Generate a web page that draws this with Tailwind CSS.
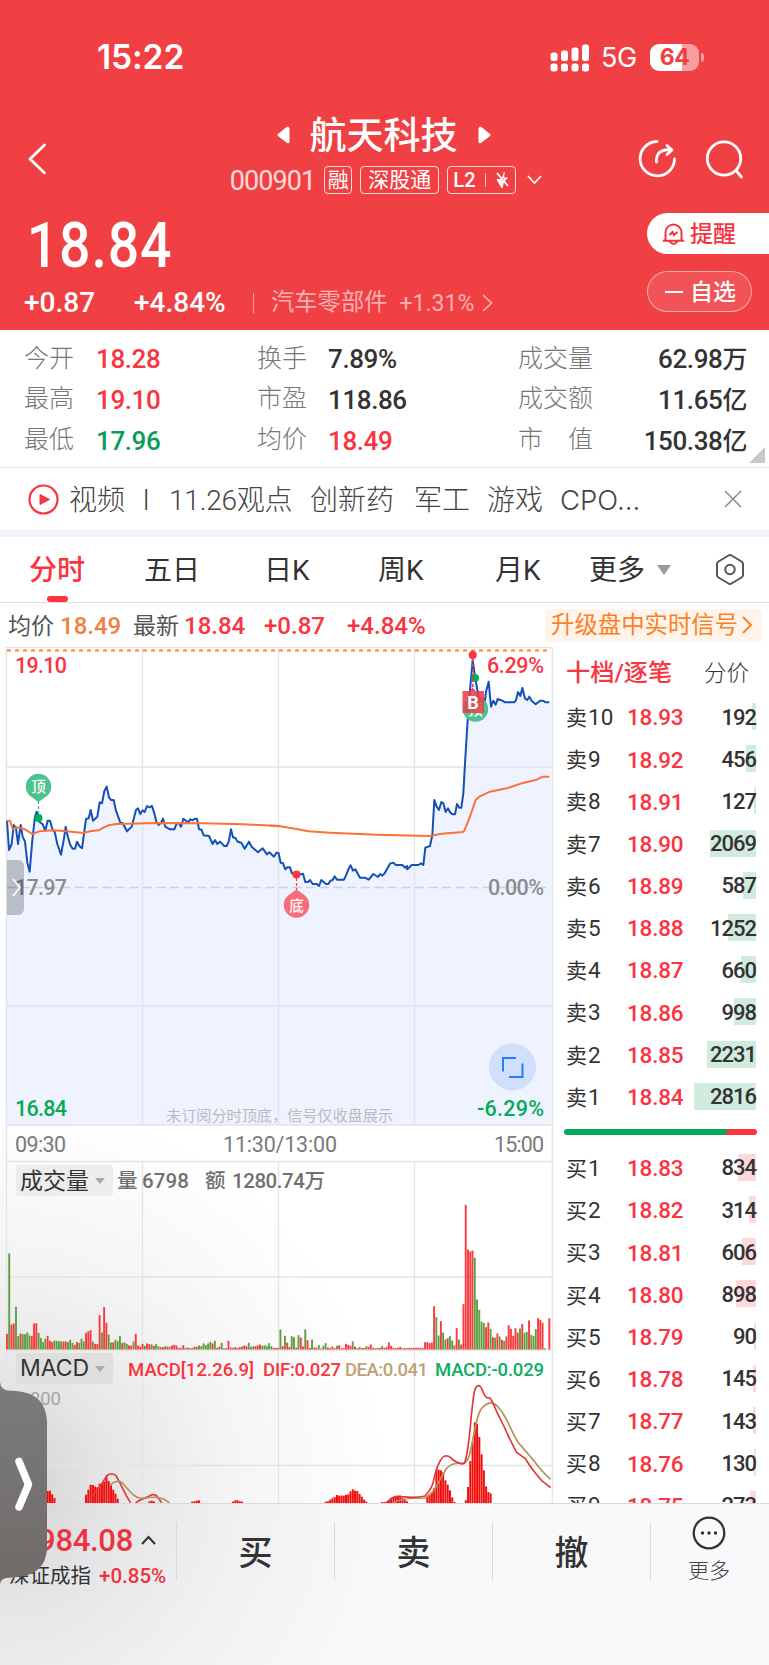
<!DOCTYPE html>
<html lang="zh-CN">
<head>
    <meta charset="UTF-8">
    <meta name="viewport" content="width=device-width, initial-scale=1.0">
    <title>航天科技 000901</title>
    <script src="https://cdn.jsdelivr.net/npm/@tailwindcss/browser@4"></script>
</head>
<body class="bg-white">
<div class="relative w-[769px] h-[1665px] overflow-hidden bg-white font-['Roboto','Noto_Sans_CJK_SC',sans-serif] leading-none text-[#333] whitespace-nowrap">

    <!-- Header -->
    <header class="h-[330px] bg-[#f04043] text-white">
        <!-- Status bar -->
        <div class="flex h-[108px] items-center pl-[97px] pr-[65px] pt-[7px]">
            <span class="font-['Inter'] text-[33.500px] font-semibold tracking-[-0.1px]">15:22</span>
            <svg class="ml-auto" width="40" height="28" viewBox="551 43.500 40 28" fill="currentColor">
                <rect x="551.500" y="52" width="7" height="8.500" rx="2.500"/><rect x="562" y="50" width="7" height="10.500" rx="2.500"/><rect x="572.500" y="47" width="7" height="13.500" rx="2.500"/><rect x="583" y="44" width="7" height="16.500" rx="2.500"/>
                <rect x="551.500" y="63" width="7" height="8" rx="2.500"/><rect x="562" y="63" width="7" height="8" rx="2.500"/><rect x="572.500" y="63" width="7" height="8" rx="2.500"/><rect x="583" y="63" width="7" height="8" rx="2.500"/>
            </svg>
            <span class="ml-[11px] w-[38px] font-['Inter'] text-[27px] tracking-[-0.5px]">5G</span>
            <div class="ml-[11px] flex h-[27px] w-[49px] items-center justify-center rounded-[9px] bg-linear-to-r from-white from-65% to-white/50 to-65% font-['Inter'] text-[23px] font-bold tracking-[-0.5px] text-[#f04043]">64</div>
            <div class="ml-[2px] h-[9px] w-[3px] rounded-r-full bg-white/50"></div>
        </div>

        <!-- Title -->
        <div class="flex h-[96px] items-start justify-between pl-[28px] pr-[25px]">
            <svg class="mt-[35px]" width="19" height="32" viewBox="0 0 19 32" fill="none" stroke="currentColor" stroke-width="2.800" stroke-linecap="round" stroke-linejoin="round"><path d="M16.500 2 2 16l14.500 14"/></svg>
            <div class="ml-[87px] flex flex-col items-center">
                <div class="mt-[8px] mr-[5px] flex h-[38px] items-center gap-[20px]">
                    <svg width="13" height="18" viewBox="0 0 13 18" fill="currentColor"><path d="M1 8 10 .8Q12.500 0 12.500 3v12q0 3-2.500 2L1 10Q0 9 1 8Z"/></svg>
                    <h1 class="pt-[2px] text-[37px] font-medium">航天科技</h1>
                    <svg width="13" height="18" viewBox="0 0 13 18" fill="currentColor"><path d="M12 8 3 .8Q.5 0 .5 3v12q0 3 2.500 2l9-7q1-1 0-2Z"/></svg>
                </div>
                <div class="mt-[12px] flex h-[28px] items-center">
                    <span class="mr-[9px] pt-[3px] text-[27px] tracking-[-0.9px] text-white/80">000901</span>
                    <span class="flex h-[28px] w-[28px] items-center justify-center rounded-[4px] border border-white/80 text-[21px]">融</span>
                    <span class="ml-[8px] flex h-[28px] w-[79px] items-center justify-center rounded-[4px] border border-white/80 text-[21px]">深股通</span>
                    <span class="ml-[8px] flex h-[28px] w-[69px] items-center rounded-[4px] border border-white/80 pl-[5px] text-[20px] font-medium">L2
                        <i class="ml-[9px] h-[14px] w-px bg-white/70"></i>
                        <svg class="ml-[9px]" width="15" height="18" viewBox="0 0 15 18" fill="currentColor" stroke="currentColor" stroke-width="1.800"><path d="m2 2 11 13"/><path d="M9.500 1 7.500 7h5L9 10M6 8.500H2L7 17l1.500-6" stroke-width="1"/></svg>
                    </span>
                    <svg class="ml-[11px]" width="15" height="10" viewBox="0 0 15 10" fill="none" stroke="currentColor" stroke-width="1.600"><path d="m1 1 6.500 7L14 1"/></svg>
                </div>
            </div>
            <div class="mt-[31px] flex gap-[28px]">
                <svg width="39" height="40" viewBox="640 139 39 40" fill="none" stroke="currentColor" stroke-width="2.800" stroke-linecap="round" stroke-linejoin="round"><path d="M659 141.500A17.200 17.200 0 1 0 676.500 159M658.500 162c-.5-9 4-12.500 14.500-12.500M669 145.500l5 4.500-5 4.500"/></svg>
                <svg width="39" height="40" viewBox="707 139 39 40" fill="none" stroke="currentColor" stroke-width="2.800" stroke-linecap="round"><circle cx="726" cy="158.500" r="16.700"/><path d="m738 170.500 5.500 6.500"/></svg>
            </div>
        </div>

        <!-- Price -->
        <div class="flex justify-between">
            <div class="pl-[24px]">
                <div class="mt-[10px] h-[63px] origin-left scale-x-[0.880] pl-[3px] text-[63px] font-medium tracking-[1px]">18.84</div>
                <div class="mt-[12px] flex h-[28px] items-center text-[28px] font-medium">
                    <span class="w-[110px]">+0.87</span>
                    <span class="w-[119px]">+4.84%</span>
                    <i class="h-[20px] w-px bg-white/50"></i>
                    <span class="ml-[17px] text-[23.300px] font-normal text-white/60">汽车零部件</span>
                    <span class="ml-[12px] text-[23px] font-normal text-white/60">+1.31%</span>
                    <svg class="ml-[8px] opacity-60" width="11" height="18" viewBox="0 0 11 18" fill="none" stroke="currentColor" stroke-width="1.700"><path d="m1 1 8.500 8L1 17"/></svg>
                </div>
            </div>
            <div class="pt-[9px] text-[23px] font-medium">
                <div class="flex h-[41px] w-[122px] items-center rounded-l-full bg-white pl-[15px] text-[#f5333f]">
                    <svg width="23" height="24" viewBox="0 0 23 24" fill="none" stroke="currentColor" stroke-width="2"><path d="M3.500 18.500V10.500a8 8 0 0 1 16 0v8M.8 18.700h21.400M7.500 19.500q4 5 8 0M7.500 13l3-3 1.500 3 3.500-3"/></svg>
                    <span class="ml-[5px] pt-[2px]">提醒</span>
                </div>
                <div class="mt-[17px] flex h-[41px] w-[105px] items-center rounded-full border border-white/50 bg-white/10 pl-[17px]">
                    <i class="h-[2px] w-[18px] bg-white"></i>
                    <span class="ml-[7px] pt-[2px]">自选</span>
                </div>
            </div>
        </div>
    </header>

    <!-- Stats -->
    <section class="relative h-[138px] border-b border-[#e6e6e8] pt-[8px] text-[26px] font-medium">
        <div class="grid h-[122px] grid-cols-[72px_161px_71px_190px_100px_129px] items-center pl-[24px] tracking-[-0.4px]">
            <span class="text-[25px] font-light tracking-normal text-[#777]">今开</span><span class="pt-[2px] text-[#fa3440]">18.28</span>
            <span class="text-[25px] font-light tracking-normal text-[#777]">换手</span><span class="pt-[2px]">7.89%</span>
            <span class="text-[25px] font-light tracking-normal text-[#777]">成交量</span><span class="pt-[2px] text-right">62.98<span class="text-[25px]">万</span></span>
            <span class="text-[25px] font-light tracking-normal text-[#777]">最高</span><span class="pt-[2px] text-[#fa3440]">19.10</span>
            <span class="text-[25px] font-light tracking-normal text-[#777]">市盈</span><span class="pt-[2px]">118.86</span>
            <span class="text-[25px] font-light tracking-normal text-[#777]">成交额</span><span class="pt-[2px] text-right">11.65<span class="text-[25px]">亿</span></span>
            <span class="text-[25px] font-light tracking-normal text-[#777]">最低</span><span class="pt-[2px] text-[#0a9c55]">17.96</span>
            <span class="text-[25px] font-light tracking-normal text-[#777]">均价</span><span class="pt-[2px] text-[#fa3440]">18.49</span>
            <span class="text-[25px] font-light tracking-normal text-[#777]">市　值</span><span class="pt-[2px] text-right">150.38<span class="text-[25px]">亿</span></span>
        </div>
        <svg class="absolute right-[4px] bottom-[4px]" width="16" height="16"><path d="M16 0v16H0Z" fill="#c8c8c8"/></svg>
    </section>

    <!-- News -->
    <section class="flex h-[62px] items-center pl-[28px] pr-[27px] text-[28px] font-light text-[#444]">
        <svg width="31" height="31" viewBox="0 0 31 31"><circle cx="15.500" cy="15.500" r="14" fill="none" stroke="#fa3440" stroke-width="2.200"/><path d="M12 10.500v10l9.500-5Z" fill="#fa3440" stroke="#fa3440" stroke-linejoin="round"/></svg>
        <div class="ml-[10px] flex pt-[4px]">
            <span class="w-[74px]">视频</span>
            <span class="w-[26px]">l</span>
            <span class="w-[141px] tracking-[-0.200px]">11.26观点</span>
            <span class="w-[104px]">创新药</span>
            <span class="w-[73px]">军工</span>
            <span class="w-[73px]">游戏</span>
            <span class="font-['Inter'] text-[27.500px]">CPO...</span>
        </div>
        <svg class="ml-auto" width="18" height="18" viewBox="0 0 18 18" stroke="#888" stroke-width="1.500"><path d="m1 1 16 16M17 1 1 17"/></svg>
    </section>
    <div class="h-[7px] bg-[#f2f3f9]"></div>

    <!-- Tabs -->
    <nav class="flex h-[66px] items-center border-b border-[#dedee0] pl-[29px] text-[28px]">
        <a class="relative flex h-full w-[115px] items-center pt-[3px] font-medium text-[#fa3440]">分时<i class="absolute bottom-0 left-[18px] h-[6px] w-[21px] rounded-[3px] bg-[#fa3440]"></i></a>
        <a class="w-[120px] pt-[3px]">五日</a>
        <a class="w-[114px] pt-[3px]">日K</a>
        <a class="w-[117px] pt-[3px]">周K</a>
        <a class="w-[94px] pt-[3px]">月K</a>
        <a class="pt-[3px]">更多</a>
        <svg class="ml-[12px]" width="14" height="10"><path d="M0 0h14L7 10Z" fill="#999"/></svg>
        <svg class="ml-[45px]" width="28" height="31" viewBox="0 0 28 31" fill="none" stroke="#555" stroke-width="2" stroke-linejoin="round"><path d="M12.500 1.500q1.500-1 3 0l10 6q1.500 1 1.500 2.500v11q0 1.500-1.500 2.500l-10 6q-1.500 1-3 0l-10-6Q1 22.500 1 21V10q0-1.500 1.500-2.500Z"/><circle cx="14" cy="15.500" r="4.700"/></svg>
    </nav>

    <!-- Latest quote -->
    <div class="flex h-[44px] items-center pl-[8px] text-[24px] font-medium text-[#fa3440]">
        <span class="w-[52px] pt-[2px] text-[23px] font-normal text-[#555]">均价</span>
        <span class="w-[73px] pt-[2px] text-[#f08040]">18.49</span>
        <span class="w-[51px] pt-[2px] text-[23px] font-normal text-[#555]">最新</span>
        <span class="w-[80px] pt-[2px]">18.84</span>
        <span class="w-[83px] pt-[2px]">+0.87</span>
        <span class="pt-[2px]">+4.84%</span>
        <div class="ml-auto mr-[7px] flex h-[33px] w-[217px] items-center rounded-[4px] bg-[#fff4eb] pl-[6px] text-[23.400px] font-normal text-[#ff7e1d]"><span class="pt-[2px]">升级盘中实时信号</span>
            <svg class="ml-[4px]" width="11" height="18" viewBox="0 0 11 18" fill="none" stroke="currentColor" stroke-width="2"><path d="m1 1 8 8-8 8"/></svg>
        </div>
    </div>

    <main class="flex h-[856px] overflow-hidden">
        <!-- Charts -->
        <svg class="shrink-0" width="553" height="856" viewBox="0 647 553 856">
            <defs>
                <radialGradient id="shade" gradientUnits="userSpaceOnUse" cx="0" cy="1485" r="390">
                    <stop offset="0" stop-color="#000" stop-opacity=".18"/><stop offset=".3" stop-color="#000" stop-opacity=".095"/><stop offset=".6" stop-color="#000" stop-opacity=".04"/><stop offset="1" stop-color="#000" stop-opacity="0"/>
                </radialGradient>
            </defs>
            <rect x="0" y="1095" width="553" height="408" fill="url(#shade)"/>

            <!-- Intraday area -->
            <g fill="#eef3ff">
                <polygon id="areaA" transform="translate(0 640) scale(.33333)"/>
                <polygon id="areaB" transform="translate(270 640) scale(.33333)"/>
            </g>
            <g stroke="#e3e4e7" stroke-width="1.300">
                <path d="M6.500 647.500H553M6.500 767H552M6.500 1006H552M6.500 1125H552M6.500 1161.500H552M6.500 1277H552M6.500 1350H552M6.500 1465.500H552M6.500 647V1503M142.500 647V1125M278.500 647V1125M414.500 647V1125M142.500 1161V1503M278.500 1161V1503M414.500 1161V1503M552.300 647V1503" fill="none"/>
            </g>
            <path d="M7 650.500H550" stroke="#fb8130" stroke-width="2" stroke-dasharray="4 4"/>
            <path d="M7 887.500H550" stroke="#c6d3e0" stroke-width="1.300" stroke-dasharray="9 4.600"/>

            <g fill="none" stroke-width="6" stroke-linejoin="round">
                <g transform="translate(0 640) scale(.33333)">
                    <polyline id="priceA" stroke="#1450b8"/>
                    <polyline stroke="#f97338" points="21,542 30,542 38,567 50,562 75,568 97,582 118,574 160,571 200,574 250,579 270,574 295,571 310,563 325,556 350,552 470,549 610,550 730,553 840,558"/>
                </g>
                <g transform="translate(270 640) scale(.33333)">
                    <polyline id="priceB" stroke="#1450b8"/>
                    <polyline stroke="#f97338" points="0,557 25,558 80,567 115,574 180,578 320,584 480,588 515,581 578,576 583,572 600,530 617,480 628,470 660,455 710,445 755,430 800,419 818,410 838,410"/>
                </g>
            </g>

            <!-- Signals -->
            <path d="M38.500 801V814" stroke="#34b877" stroke-width="1.200" stroke-dasharray="3 2"/>
            <path d="M30 796 38.500 802 47 796A12.700 12.700 0 1 0 30 796Z" fill="#4cc38c"/>
            <circle cx="38.500" cy="818" r="4" fill="#00ac5b"/>
            <path d="M296.500 878V891" stroke="#fa3440" stroke-width="1.200" stroke-dasharray="3 2"/>
            <path d="M288 895.500 296.500 889.500 305 895.500A12.700 12.700 0 1 1 288 895.500Z" fill="#f76d78"/>
            <circle cx="296.500" cy="874.500" r="4" fill="#fa3440"/>
            <circle cx="475.500" cy="709" r="12.700" fill="#4cc38c"/>
            <g fill="#fff" text-anchor="middle" font-size="14.500" font-weight="500">
                <text x="38.500" y="792">顶</text><text x="296.500" y="911">底</text><text x="475.500" y="715">顶</text>
            </g>
            <circle cx="475" cy="678" r="4" fill="#00ac5b"/>
            <path d="M472.700 659V691" stroke="#fa3440" stroke-width="1.500" stroke-dasharray="3 2"/>
            <circle cx="472.700" cy="655" r="4" fill="#fa3440"/>
            <path d="M462.500 691h7l3-3.500 3 3.500h8.500v22h-21.500Z" fill="#ea3a48" fill-opacity=".85"/>
            <text x="473" y="709" text-anchor="middle" font-size="18" font-weight="700" fill="#fff">B</text>

            <!-- Axis labels -->
            <g font-size="21.500" font-weight="500">
                <text x="15" y="672.500" textLength="52" fill="#fa3440">19.10</text>
                <text x="487" y="672.500" textLength="57" fill="#fa3440">6.29%</text>
                <text x="15" y="895" textLength="52" fill="#8c8c8c">17.97</text>
                <text x="488" y="895" textLength="56" fill="#8c8c8c">0.00%</text>
                <text x="15" y="1116" textLength="52" fill="#06a957">16.84</text>
                <text x="477" y="1116" textLength="67" fill="#06a957">-6.29%</text>
            </g>
            <text x="166" y="1121" font-size="15.200" textLength="227" fill="#b9bcc2">未订阅分时顶底，信号仅收盘展示</text>
            <circle cx="512.500" cy="1067" r="23.500" fill="#d0dffc"/>
            <path d="M503 1071.500V1058H516M522.500 1063.500V1077H509" fill="none" stroke="#2b7bfb" stroke-width="2"/>
            <g font-size="21.500" fill="#7a7a7a">
                <text x="15" y="1151.500" textLength="51">09:30</text>
                <text x="223" y="1151.500" textLength="114">11:30/13:00</text>
                <text x="494" y="1151.500" textLength="50">15:00</text>
            </g>

            <!-- Volume -->
            <g id="volume"></g>
            <rect x="16" y="1165" width="97" height="31" rx="3" fill="#ededed"/>
            <text x="20" y="1188.500" font-size="23" textLength="69" fill="#333">成交量</text>
            <path d="M95 1178h10l-5 6Z" fill="#aaa"/>
            <g font-size="20.500" fill="#707070" font-weight="500">
                <text x="117" y="1188">量</text><text x="142" y="1188" textLength="47">6798</text>
                <text x="205" y="1188">额</text><text x="232" y="1188" textLength="93">1280.74万</text>
            </g>

            <!-- MACD -->
            <g id="macd" fill="#f20d0d"></g>
            <g fill="none" stroke-width="5" stroke-linejoin="round">
                <g transform="translate(0 1350) scale(.33333)">
                    <path stroke="#e03a3f" d="M262 450C290 430 305 400 322 376Q335 368 347 376C360 395 375 435 392 458M407 458Q430 445 445 440 458 430 470 437L485 458"/>
                    <path stroke="#b2935b" d="M330 405Q350 388 365 397C385 415 400 445 425 445 450 442 480 435 508 458"/>
                </g>
                <g transform="translate(270 1350) scale(.33333)">
                    <path stroke="#b2935b" d="M370 458Q390 444 465 444C490 435 510 385 530 355Q545 338 575 340 595 340 602 300C610 270 620 180 640 170Q655 155 670 160C705 180 720 240 745 278L790 330Q815 365 842 388"/>
                    <path stroke="#e6353a" d="M350 458Q370 435 395 440 440 445 465 438C475 425 485 420 490 395 500 345 515 320 525 318Q535 317 541 322 550 332 560 336 575 345 583 340C600 300 600 200 613 125Q622 95 635 115 643 140 650 143L660 144Q668 155 680 185L700 225Q725 280 740 307L765 325 785 355Q800 375 815 392L842 413"/>
                </g>
            </g>
            <rect x="16" y="1353" width="97" height="31" rx="3" fill="#dfdfdf"/>
            <text x="20" y="1376" font-family="Inter" font-size="23" textLength="69" fill="#333">MACD</text>
            <path d="M95 1366h10l-5 6Z" fill="#aaa"/>
            <g font-size="18.500" font-weight="500">
                <text x="128" y="1376" textLength="126" fill="#fa3440">MACD[12.26.9]</text>
                <text x="263" y="1376" textLength="78" fill="#fa3440">DIF:0.027</text>
                <text x="345" y="1376" textLength="83" fill="#bda273">DEA:0.041</text>
                <text x="435" y="1376" textLength="109" fill="#0cae5f">MACD:-0.029</text>
                <text x="15" y="1405" textLength="46" fill="#a5a5a5" font-weight="400">0.200</text>
            </g>
        </svg>

        <!-- Order book -->
        <aside class="w-[216px] pl-[11px] pr-[12px]">
            <div class="flex h-[49px] items-center pl-[2px] pt-[3px] text-[24.200px] font-medium text-[#fa3440]">十档/逐笔<span class="ml-auto mr-[8px] text-[22.500px] font-light text-[#333]">分价</span></div>
            <div id="asks"></div>
            <div class="mt-[11px] mb-[12px] h-[6px] rounded-full bg-[linear-gradient(120deg,#04ab5c_83.500%,#fa3440_83.500%)]"></div>
            <div id="bids"></div>
        </aside>
    </main>

    <!-- Bottom bar -->
    <footer class="flex h-[162px] border-t border-[#d9dadd] bg-[#f9f9fb] bg-[radial-gradient(circle_at_0_-18px,rgba(0,0,0,.16),rgba(0,0,0,.08)_117px,rgba(0,0,0,.035)_234px,transparent_390px)]">
        <div class="mt-[18px] flex h-[58px] w-[177px] flex-col border-r border-[#d9dadd] text-[#ec3440]">
            <div class="mt-[3px] flex h-[30px] items-center text-[31px] font-medium"><span class="w-[133px] text-right tracking-[-0.300px]">12984.08</span>
                <svg class="ml-[8px]" width="15" height="10" viewBox="0 0 15 10" fill="none" stroke="#333" stroke-width="2"><path d="m1 9 6.500-7L14 9"/></svg>
            </div>
            <div class="mt-[11px] flex h-[21px] items-center pl-[9px] text-[20.500px]"><span class="w-[90px] text-[#333]">深证成指</span><span class="font-medium">+0.85%</span></div>
        </div>
        <div class="mt-[18px] flex h-[58px] w-[158px] items-center justify-center border-r border-[#d9dadd] pt-[3px] text-[34px] font-medium">买</div>
        <div class="mt-[18px] flex h-[58px] w-[158px] items-center justify-center border-r border-[#d9dadd] pt-[3px] text-[34px] font-medium">卖</div>
        <div class="mt-[18px] flex h-[58px] w-[158px] items-center justify-center border-r border-[#d9dadd] pt-[3px] text-[34px] font-medium">撤</div>
        <div class="flex flex-1 flex-col items-center pt-[12px] pr-[2px]">
            <svg width="34" height="34" viewBox="0 0 34 34"><circle cx="17" cy="17" r="15.300" fill="none" stroke="#333" stroke-width="2.300"/><g fill="#333"><circle cx="10.500" cy="17" r="1.700"/><circle cx="17" cy="17" r="1.700"/><circle cx="23.500" cy="17" r="1.700"/></g></svg>
            <span class="mt-[11px] text-[21px] font-light text-[#444]">更多</span>
        </div>
    </footer>

    <!-- Drawer handles over the charts -->
    <div class="absolute left-[7px] top-[860px] flex h-[55px] w-[17px] items-center justify-center rounded-r-[6px] bg-black/22">
        <svg class="ml-[2px]" width="9" height="19" viewBox="0 0 9 19" fill="none" stroke="#fff" stroke-width="1.600"><path d="m1 1 7 8.500L1 18"/></svg>
    </div>
    <svg class="absolute left-0 top-[1380px]" width="50" height="206" viewBox="0 1380 50 206">
        <defs><linearGradient id="knob" x2="0" y2="1"><stop stop-color="#7b7b7b"/><stop offset="1" stop-color="#706b69"/></linearGradient></defs>
        <path d="M0 1382Q1 1390 8 1390.500L16 1391Q46 1393 47 1422V1548Q46 1574 18 1577L6 1578Q1 1579 0 1584Z" fill="url(#knob)"/>
        <path d="M19 1461.500 28.500 1484.500 19 1507" fill="none" stroke="#fff" stroke-width="7.500" stroke-linecap="round" stroke-linejoin="round"/>
    </svg>
</div>

<script>
    // Intraday price, morning and afternoon session
    const morning = '21,542 27,630 35,612 41,555 48,565 54,612 62,555 68,590 75,605 82,668 89,695 97,600 105,530 110,515 118,545 128,553 136,572 143,542 150,542 158,570 164,575 172,612 183,644 192,595 197,560 204,592 211,615 218,626 225,626 231,605 238,618 246,625 258,537 266,535 272,510 279,542 292,530 299,487 306,490 313,453 320,440 327,472 333,480 341,480 348,512 361,548 368,549 381,574 395,560 408,510 414,505 421,522 428,511 434,516 441,498 448,502 456,498 463,520 469,545 476,555 483,548 489,536 496,560 510,568 523,568 530,550 537,550 543,560 550,536 564,547 571,538 578,541 584,536 591,536 597,567 605,570 611,586 627,588 638,612 645,600 652,612 660,605 673,618 680,618 686,605 693,568 699,592 706,594 713,605 724,608 734,626 747,605 755,620 774,637 788,625 801,643 808,637 822,650 829,638 835,638';
    const afternoon = '25,637 32,668 39,670 46,688 52,682 60,682 66,700 80,705 99,701 106,726 114,726 120,720 128,732 140,732 147,738 154,720 168,732 175,732 181,722 188,720 194,709 201,719 222,719 229,704 236,686 242,676 249,692 256,688 270,713 285,713 296,719 310,702 324,711 330,702 337,707 344,700 360,671 370,668 378,675 397,675 405,683 411,678 412,688 425,675 445,675 453,670 460,675 466,623 480,618 487,585 493,480 500,500 507,510 514,486 520,490 527,516 534,505 541,518 548,523 555,523 561,492 568,503 574,503 580,460 585,370 593,240 600,150 608,60 615,110 622,150 630,190 640,220 648,155 656,125 663,200 670,182 677,194 683,177 697,182 705,187 733,187 738,180 744,156 751,168 757,144 765,175 772,180 778,170 785,182 797,193 810,182 820,182 826,187 838,187';
    document.getElementById('priceA').setAttribute('points', morning);
    document.getElementById('priceB').setAttribute('points', afternoon);
    document.getElementById('areaA').setAttribute('points', '21,1455 ' + morning + ' 835,1455');
    document.getElementById('areaB').setAttribute('points', '25,1455 ' + afternoon + ' 844,187 844,1455');

    // One volume bar per minute, r = up, g = down
    const volume = 'r47 g288 r75 r78 g128 g40 r48 g46 g46 g51 g42 r40 r78 r79 g50 g35 g22 g32 r41 r26 r22 g27 g26 g25 g24 r24 r24 g22 g29 g20 r14 r22 g20 g32 g24 r50 r55 r58 g24 r17 r16 r103 g51 r127 r80 g45 g21 r21 g29 g25 g41 r19 g21 g17 r12 r12 g24 r47 r12 r8 r17 g11 r18 r16 g15 r11 g16 g10 r7 r7 g10 r9 g8 r12 r14 r12 r5 g5 r13 g5 r6 g4 g5 r8 r8 g12 g10 g18 g13 g18 g23 r18 g26 g5 r8 g20 g4 r4 r26 r6 g5 r7 r5 r7 g9 r12 r10 g20 g8 g10 r10 r12 r15 g11 g13 g10 g19 g10 r5 r5 r5 g60 r10 g41 r21 r8 g40 g37 r6 g43 r36 r9 g60 r28 r5 g30 r6 r5 g13 r3 g11 g19 r6 r4 r9 r4 g11 r13 r4 r4 r17 r14 r11 g24 r9 g4 g8 r5 r4 g10 r8 r15 r5 g4 g5 r5 g10 r5 r8 r21 r11 r5 r4 r5 r8 g4 r4 g4 r5 r5 r5 r5 r5 r5 r4 r22 r22 r19 r21 r130 g97 g42 r85 g51 g30 r34 g40 g27 r12 r64 g30 r15 r136 r434 r300 r294 r297 g275 g150 g119 g84 g80 r67 r81 g62 r37 g35 r48 g39 r29 g26 r39 r73 r62 r41 r64 r51 g63 r77 g50 g53 r87 g44 g40 g61 r94 r89 r80 g4 r0 r94';
    document.getElementById('volume').innerHTML = volume.split(' ').map((bar, i) => {
        const h = bar.slice(1) / 3;
        return `<rect x="${6 + i * 2.26}" y="${1349.5 - h}" width="1.9" height="${h}" fill="${bar[0] === 'r' ? '#fb3a40' : '#5d9e40'}"/>`;
    }).join('');

    // MACD histogram runs: first minute -> heights
    const macd = {
        18: [36, 37, 26, 15],
        35: [25, 40, 55, 54, 49, 47, 58, 60, 64, 80, 66, 53, 40, 28, 13],
        63: [5, 7, 5],
        82: [4, 5, 7, 8],
        100: [4, 8, 8, 5, 4],
        141: [4, 5, 10, 14, 18, 24, 22, 22, 22, 24, 26, 35, 41, 37, 36, 27, 19, 10, 4],
        166: [3, 3, 4, 8, 16, 19, 22, 20, 22, 16, 10, 5],
        186: [22, 27, 30, 45, 101, 100, 98, 92, 68, 55, 38, 17, 3],
        203: [8, 48, 126, 182, 242, 238, 198, 146, 98, 50, 33, 29]
    };
    document.getElementById('macd').innerHTML = Object.entries(macd).map(([start, list]) => list.map((v, i) =>
        `<rect x="${6 + (+start + i) * 2.26}" y="${1503 - v / 3}" width="2" height="${v / 3}"/>`).join('')).join('');

    // Order book rows: label, price, volume, depth bar width
    const asks = [['卖10', '18.93', 192, 4], ['卖9', '18.92', 456, 10], ['卖8', '18.91', 127, 2], ['卖7', '18.90', 2069, 46], ['卖6', '18.89', 587, 13], ['卖5', '18.88', 1252, 28], ['卖4', '18.87', 660, 15], ['卖3', '18.86', 998, 22], ['卖2', '18.85', 2231, 49], ['卖1', '18.84', 2816, 62]];
    const bids = [['买1', '18.83', 834, 18], ['买2', '18.82', 314, 7], ['买3', '18.81', 606, 14], ['买4', '18.80', 898, 20], ['买5', '18.79', 90, 2], ['买6', '18.78', 145, 3], ['买7', '18.77', 143, 3], ['买8', '18.76', 130, 2], ['买9', '18.75', 273, 6]];
    function renderRows(id, rows, color) {
        document.getElementById(id).innerHTML = rows.map(([label, price, qty, w]) => `
            <div class="relative flex h-[42.2px] items-center pl-[2px] pr-[1px] pt-[1px] text-[22.5px] font-medium">
                <i class="absolute right-[1px] top-[7px] h-[27px] ${color}" style="width:${w}px"></i>
                <span class="relative w-[61px] font-normal"><span class="text-[21px]">${label.slice(0, 1)}</span><span class="ml-[1px]">${label.slice(1)}</span></span>
                <span class="relative tracking-[-0.2px] text-[#fa3440]">${price}</span>
                <span class="relative ml-auto text-[22px] tracking-[-1px]">${qty}</span>
            </div>`).join('');
    }
    renderRows('asks', asks, 'bg-[#d1ecdf]');
    renderRows('bids', bids, 'bg-[#fdd9dc]');
</script>
</body>
</html>
